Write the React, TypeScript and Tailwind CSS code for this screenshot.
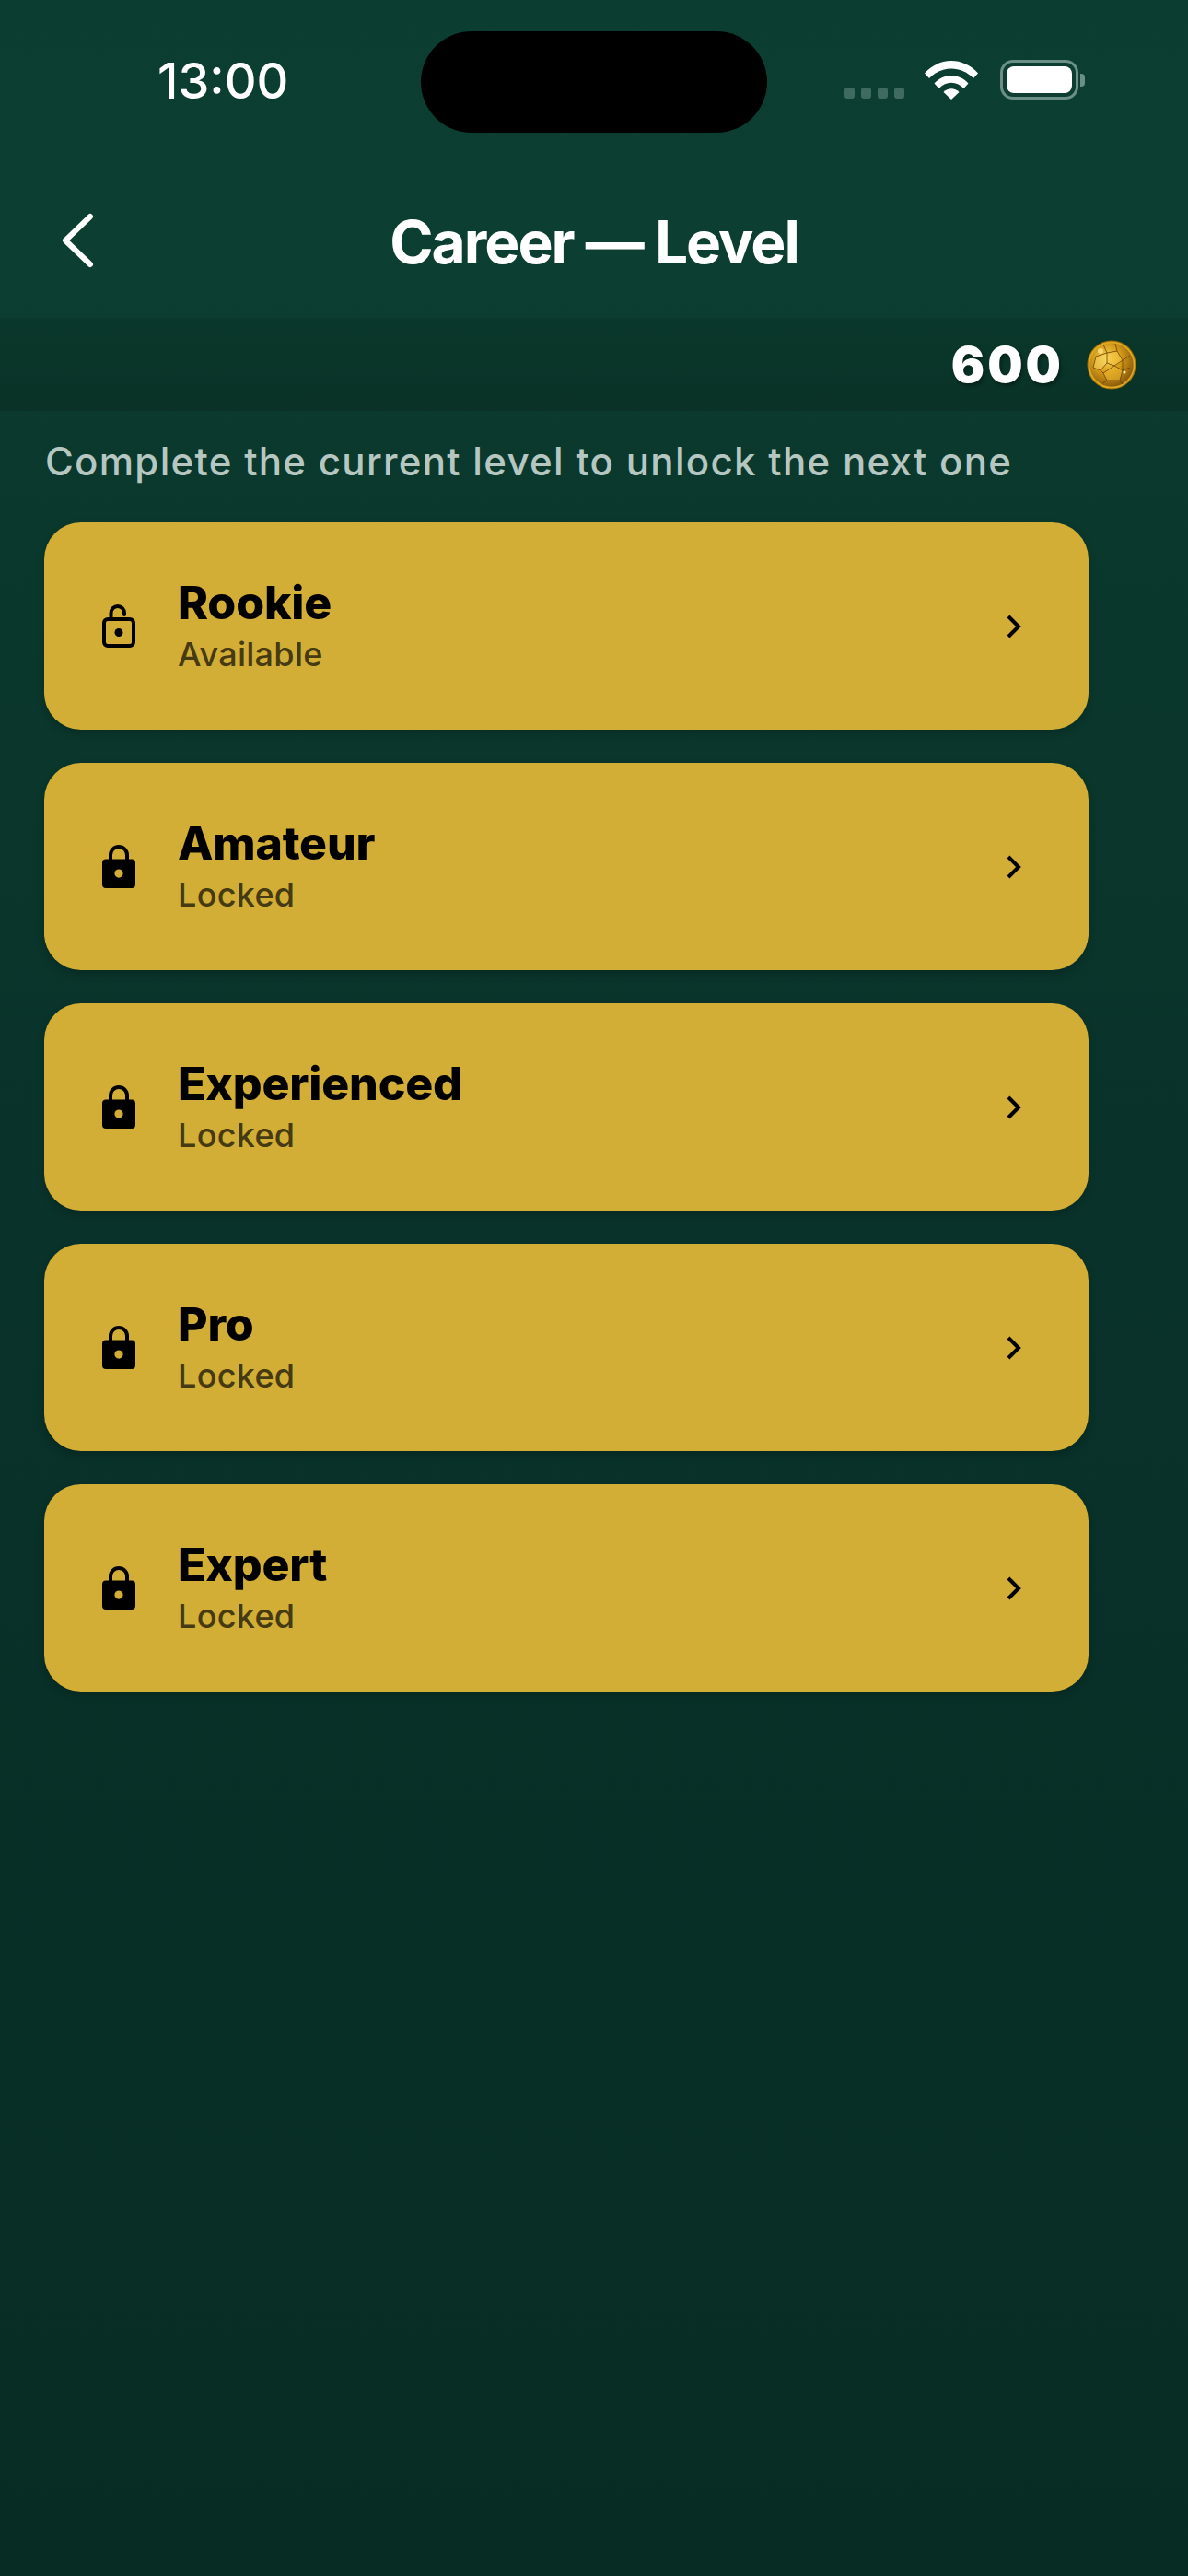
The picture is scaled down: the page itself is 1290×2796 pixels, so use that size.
const LEVELS = [
  { name: 'Rookie', status: 'Available', open: true },
  { name: 'Amateur', status: 'Locked', open: false },
  { name: 'Experienced', status: 'Locked', open: false },
  { name: 'Pro', status: 'Locked', open: false },
  { name: 'Expert', status: 'Locked', open: false },
];

function LockIcon({ open }: { open: boolean }) {
  if (open) {
    return (
      <svg width="36" height="47" viewBox="0 0 36 47" className="shrink-0" fill="none" stroke="black">
        <path d="M9.5 15 V9.5 a7.25 7.5 0 0 1 14.5 0 V11" strokeWidth="4" strokeLinecap="round" />
        <rect x="2" y="16" width="32" height="29" rx="4" strokeWidth="4" />
        <circle cx="18" cy="30.5" r="4.5" fill="black" stroke="none" />
      </svg>
    );
  }
  return (
    <svg width="36" height="47" viewBox="0 0 36 47" className="shrink-0" fill="none">
      <path d="M9 18 V11 a9 9 0 0 1 18 0 V18" stroke="black" strokeWidth="4" />
      <path
        fillRule="evenodd"
        fill="black"
        d="M4 15.5 H32 a4 4 0 0 1 4 4 V43 a4 4 0 0 1 -4 4 H4 a4 4 0 0 1 -4 -4 V19.5 a4 4 0 0 1 4 -4 Z M18 26.5 a4.6 4.6 0 1 0 0 9.2 a4.6 4.6 0 1 0 0 -9.2 Z"
      />
    </svg>
  );
}

function WifiIcon() {
  return (
    <svg width="58" height="42" viewBox="0 0 58 42" fill="white" className="shrink-0">
      <path d="M0 13.5 C16 -4.5 42 -4.5 58 13.5 L53 19 C39.5 5 18.5 5 5 19 Z" />
      <path d="M10.5 24.5 C20.5 13 37.5 13 47.5 24.5 L42.5 30 C34.5 21.5 23.5 21.5 15.5 30 Z" />
      <path d="M20.5 34 C25.5 29 32.5 29 37.5 34 L29 42 Z" />
    </svg>
  );
}

function BatteryIcon() {
  return (
    <div className="flex items-center shrink-0">
      <div className="w-[85px] h-[43px] rounded-[14px] border-[3px] border-[#6b8f85] p-[4px]">
        <div className="w-full h-full rounded-[8px] bg-white" />
      </div>
      <div className="w-[5px] h-[14px] ml-[2px] rounded-r-[4px] bg-[#6b8f85]" />
    </div>
  );
}

function CoinIcon() {
  return (
    <svg width="54" height="54" viewBox="0 0 54 54" className="shrink-0">
      <defs>
        <radialGradient id="coinFill" cx="40%" cy="36%" r="70%">
          <stop offset="0%" stopColor="#fbd65a" />
          <stop offset="45%" stopColor="#d59a18" />
          <stop offset="100%" stopColor="#80500a" />
        </radialGradient>
      </defs>
      <circle cx="27" cy="27" r="26.5" fill="#a87407" />
      <circle cx="27" cy="27" r="24.5" fill="url(#coinFill)" stroke="#e0ac24" strokeWidth="1.6" />
      <path d="M22 14 L33 12 L39 22 L30 28 L22 25 Z" fill="#f6c945" opacity="0.55" />
      <path d="M10 18 L22 14 L22 25 L15 33 L7 30 Z" fill="#f8d668" opacity="0.5" />
      <path d="M18 36 L30 28 L39 33 L36 44 L22 44 Z" fill="#eeb930" opacity="0.55" />
      <g fill="none" stroke="#6a4205" strokeWidth="0.8">
        <path d="M22 14 L33 12 L39 22 L30 28 L22 25 Z" />
        <path d="M10 18 L22 14 M22 25 L15 33 L7 30 L10 18" />
        <path d="M33 12 L31 4 M22 14 L18 5 M39 22 L47 17 M30 28 L39 33 L47 30 M39 22 L39 33" />
        <path d="M15 33 L18 36 L30 28 M18 36 L22 44 L36 44 L39 33 M22 44 L17 47 M36 44 L39 48" />
      </g>
      <circle cx="15" cy="12" r="3" fill="#ffe88f" opacity="0.7" />
      <circle cx="41" cy="35" r="1.6" fill="#fff3b0" />
    </svg>
  );
}

function LevelCard({ name, status, open }: { name: string; status: string; open: boolean }) {
  return (
    <div className="w-[1134px] h-[225px] flex items-center rounded-[40px] bg-[#d2ae36] pl-[63px] pr-[73px] shadow-[0_4px_10px_rgba(0,0,0,0.2)]">
      <LockIcon open={open} />
      <div className="ml-[46px] -mt-[4px] flex-1 flex flex-col">
        <span className="mb-[2px] text-[50px] leading-[62px] font-extrabold text-black tracking-[-0.2px]">{name}</span>
        <span className="text-[36px] leading-[46px] font-medium text-[#463a12] tracking-[0.3px]">{status}</span>
      </div>
      <svg width="16" height="26" viewBox="0 0 16 26" fill="none" stroke="black" strokeWidth="4" className="shrink-0">
        <path d="M2 2 L13 13 L2 24" />
      </svg>
    </div>
  );
}

export default function App() {
  return (
    <div className="w-[1290px] h-[2796px] overflow-hidden bg-[linear-gradient(180deg,#0b3d30_0,#0c3f31_300px,#0b392d_460px,#09322a_1400px,#072c23_2796px)] font-['Inter',sans-serif]">
      {/* status bar */}
      <div className="h-[190px] flex items-start pt-[34px] pl-[171px]">
        <span className="w-[286px] mt-[20px] text-[54px] leading-[68px] font-medium text-white">13:00</span>
        <div className="w-[376px] h-[110px] rounded-[55px] bg-black" />
        <div className="ml-[84px] mt-[31px] flex items-end">
          <div className="flex gap-[7px] mb-[1px]">
            <div className="w-[11px] h-[12px] rounded-[3px] bg-[#3f6a5e]" />
            <div className="w-[11px] h-[12px] rounded-[3px] bg-[#3f6a5e]" />
            <div className="w-[11px] h-[12px] rounded-[3px] bg-[#3f6a5e]" />
            <div className="w-[11px] h-[12px] rounded-[3px] bg-[#3f6a5e]" />
          </div>
          <div className="ml-[22px]">
            <WifiIcon />
          </div>
          <div className="ml-[24px]">
            <BatteryIcon />
          </div>
        </div>
      </div>

      {/* nav */}
      <div className="relative h-[155px] flex items-center justify-center">
        <svg width="36" height="60" viewBox="0 0 36 60" className="absolute left-[66px] top-[41px]" fill="none" stroke="white" strokeWidth="6" strokeLinecap="round" strokeLinejoin="round">
          <path d="M32 4 L5 30 L32 56" />
        </svg>
        <h1 className="text-[64px] leading-[76px] font-bold text-white -mt-[10px] tracking-[-2px]">Career — Level</h1>
      </div>

      {/* coin balance */}
      <div className="h-[101px] flex items-center justify-end gap-[25px] pr-[56px] bg-gradient-to-b from-[#0a382b] to-[#0a3227]">
        <span className="text-[54px] leading-[64px] font-black text-white tracking-[3px] [text-shadow:2px_3px_4px_rgba(0,0,0,0.35)]">600</span>
        <CoinIcon />
      </div>

      <p className="mt-[28px] ml-[49px] text-[42px] leading-[54px] font-medium text-[#b5c7c0] tracking-[1.3px]">
        Complete the current level to unlock the next one
      </p>

      <div className="mt-[39px] ml-[48px] flex flex-col gap-[36px]">
        {LEVELS.map((level) => (
          <LevelCard key={level.name} {...level} />
        ))}
      </div>
    </div>
  );
}
